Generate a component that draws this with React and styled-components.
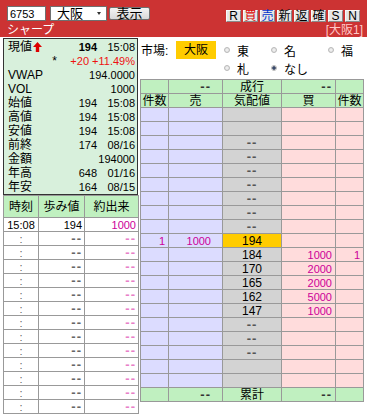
import React from 'react';
import styled, { createGlobalStyle } from 'styled-components';

const red = '#cc3333';
const magenta = '#cc0099';
const headGreen = '#c0f0c0';
const gridGray = '#999999';

const GlobalStyle = createGlobalStyle`
  html, body {
    margin: 0;
    padding: 0;
    background: #ffffff;
  }
  body {
    font-family: "Liberation Sans", "Noto Sans CJK JP", sans-serif;
    font-size: 11px;
    color: #000;
  }
`;

const Page = styled.div`
  width: 367px;
`;

/* ---------- header ---------- */

const Header = styled.header`
  background: ${red};
  height: 37px;
  box-sizing: border-box;
  padding: 6px 4px 0 7px;
`;

const HeaderTop = styled.div`
  display: flex;
  align-items: flex-start;
  height: 16px;
`;

const CodeInput = styled.input`
  box-sizing: border-box;
  width: 39px;
  height: 15px;
  margin: 0;
  padding: 0 2px;
  border: 1px solid #6f6f6f;
  background: #fff;
  font: 11px "Liberation Sans", sans-serif;
  color: #000;
  outline: none;
`;

const SelectWrap = styled.div`
  position: relative;
  width: 57px;
  height: 15px;
  margin-left: 4px;
`;

const MarketSelect = styled.select`
  appearance: none;
  box-sizing: border-box;
  width: 100%;
  height: 100%;
  margin: 0;
  padding: 0 0 0 6px;
  border: 1px solid #6f6f6f;
  border-radius: 0;
  background: #fff;
  font: 13px/13px "Liberation Sans", "Noto Sans CJK JP", sans-serif;
  color: #000;
`;

const SelectArrow = styled.span`
  position: absolute;
  right: 6px;
  top: 6px;
  width: 0;
  height: 0;
  border-left: 2px solid transparent;
  border-right: 2px solid transparent;
  border-top: 3px solid #333;
  pointer-events: none;
`;

const ShowButton = styled.button`
  box-sizing: border-box;
  width: 41px;
  height: 13px;
  margin: 1px 0 0 2px;
  padding: 0;
  border: 1px solid #707070;
  border-radius: 2px;
  background: linear-gradient(#f4f4f4, #d8d8d8);
  font: 13px/11px "Liberation Sans", "Noto Sans CJK JP", sans-serif;
  color: #000;
`;

const ToolGroup = styled.div`
  display: flex;
  gap: 2px;
  margin: 4px 3px 0 auto;
`;

const ToolButton = styled.button`
  box-sizing: border-box;
  width: 15px;
  height: 12px;
  margin: 0;
  padding: 0;
  border: 1px solid;
  border-color: #f8f8f8 #8a8a8a #8a8a8a #f8f8f8;
  background: #e6e6e6;
  font: 12px/10px "Liberation Sans", "Noto Sans CJK JP", sans-serif;
  color: ${p => p.$color || '#000'};
`;

const HeaderBottom = styled.div`
  display: flex;
  justify-content: space-between;
  margin-top: 1px;
  height: 14px;
  line-height: 14px;
  font-size: 12px;
`;

const CompanyName = styled.span`
  color: #ffffff;
`;

const MarketTag = styled.span`
  color: #ffc8c8;
`;

/* ---------- body ---------- */

const Main = styled.div`
  display: flex;
  align-items: flex-start;
  margin-top: 1px;
`;

const LeftCol = styled.div`
  width: 135px;
  margin-left: 3px;
`;

const InfoBox = styled.div`
  border: 1px solid #333;
  background: #d8f0dc;
  padding: 1px 2px 0 4px;
`;

const InfoRow = styled.div`
  display: grid;
  grid-template-columns: 1fr 40px 38px;
  height: 14px;
  line-height: 14px;
  white-space: nowrap;
`;

const InfoLabel = styled.span`
  display: flex;
  align-items: center;
  justify-content: ${p => (p.$right ? 'flex-end' : 'flex-start')};
  font-size: 12px;
`;

const InfoValue = styled.span`
  grid-column: ${p => (p.$wide ? '2 / 4' : 'auto')};
  text-align: right;
  font-weight: ${p => (p.$bold ? 700 : 400)};
  color: ${p => p.$color || '#000'};
`;

const GridTable = styled.table`
  border-collapse: collapse;
  table-layout: fixed;
  border: 1px solid ${gridGray};
`;

const TickTable = styled(GridTable)`
  width: 135px;
`;

const HeadCell = styled.th`
  height: 21px;
  padding: 0;
  border: 1px solid ${gridGray};
  background: ${headGreen};
  font-size: 12px;
  font-weight: 400;
  line-height: 14px;
  text-align: center;
`;

const Row = styled.tr`
  height: 14px;
`;

const Cell = styled.td`
  padding: 0 ${p => p.$pr ?? 2}px 0 0;
  border: 1px solid ${gridGray};
  background: ${p => p.$bg || '#fff'};
  color: ${p => p.$color || '#000'};
  text-align: ${p => p.$align || 'right'};
  font-size: ${p => p.$size || 11}px;
  line-height: 12px;
  white-space: nowrap;
  overflow: hidden;
`;

const Dash = styled.span`
  font-size: 13px;
  font-weight: 700;
  letter-spacing: 1px;
  color: ${p => p.$color || '#555'};
`;

const RightCol = styled.div`
  flex: 1;
`;

const MarketBar = styled.div`
  display: flex;
  align-items: flex-start;
  height: 41px;
  box-sizing: border-box;
  padding-top: 3px;
`;

const MarketLabel = styled.span`
  width: 35px;
  padding-left: 3px;
  line-height: 20px;
  font-size: 12px;
`;

const MarketBadge = styled.span`
  width: 40px;
  height: 18px;
  line-height: 18px;
  background: #ffcc00;
  text-align: center;
  font-size: 12px;
`;

const RadioGrid = styled.div`
  display: grid;
  grid-template-columns: 47px 57px 1fr;
  grid-auto-rows: 18px;
  margin-left: 7px;
`;

const RadioItem = styled.label`
  display: flex;
  align-items: center;
  gap: 7px;
  padding-left: 1px;
  font-size: 12px;
  color: #000;
`;

const Radio = styled.input.attrs({ type: 'radio' })`
  appearance: none;
  width: 6px;
  height: 6px;
  margin: 0;
  border: 1px solid #b8b8b8;
  border-radius: 50%;
  background: ${p =>
    p.checked
      ? 'radial-gradient(circle, #3a4a6a 0 1.5px, #e6e6e6 2px)'
      : 'radial-gradient(circle, #f4f4f4, #dcdcdc)'};
`;

const BookTable = styled(GridTable)`
  width: 223px;
  margin-left: 2px;
`;

const BookHead = styled.td`
  padding: 0 ${p => p.$pr ?? 0}px 0 0;
  border: 1px solid ${gridGray};
  background: ${headGreen};
  text-align: ${p => p.$align || 'center'};
  font-size: 12px;
  line-height: 12px;
  white-space: nowrap;
`;

const UpArrow = () => (
  <svg width="9" height="10" viewBox="0 0 9 10" style={{ marginLeft: 1 }}>
    <path d="M4.5 0 L9 5 H6.2 V10 H2.8 V5 H0 Z" fill="#dd0000" />
  </svg>
);

const info = [
  { label: '始値', value: '194', time: '15:08' },
  { label: '高値', value: '194', time: '15:08' },
  { label: '安値', value: '194', time: '15:08' },
  { label: '前終', value: '174', time: '08/16' },
];

const ticks = [
  { time: '15:08', price: '194', vol: '1000' },
  ...Array.from({ length: 13 }, () => ({ time: ':' })),
];

const dashRow = { price: '--' };
const book = [
  {},
  {},
  ...Array.from({ length: 7 }, () => dashRow),
  { sc: '1', sell: '1000', price: '194', hit: true },
  { price: '184', buy: '1000', bc: '1' },
  { price: '170', buy: '2000' },
  { price: '165', buy: '2000' },
  { price: '162', buy: '5000' },
  { price: '147', buy: '1000' },
  ...Array.from({ length: 3 }, () => dashRow),
  {},
  {},
];

const SELL_BG = '#dcdcff';
const PRICE_BG = '#d3d3d3';
const BUY_BG = '#ffdcdc';

export default function App() {
  return (
    <Page>
      <GlobalStyle />
      <Header>
        <HeaderTop>
          <CodeInput defaultValue="6753" />
          <SelectWrap>
            <MarketSelect defaultValue="osaka">
              <option value="osaka">大阪</option>
            </MarketSelect>
            <SelectArrow />
          </SelectWrap>
          <ShowButton>表示</ShowButton>
          <ToolGroup>
            <ToolButton>R</ToolButton>
            <ToolButton $color="#dd0000">買</ToolButton>
            <ToolButton $color="#0033cc">売</ToolButton>
            <ToolButton>新</ToolButton>
            <ToolButton>返</ToolButton>
            <ToolButton>確</ToolButton>
            <ToolButton>S</ToolButton>
            <ToolButton>N</ToolButton>
          </ToolGroup>
        </HeaderTop>
        <HeaderBottom>
          <CompanyName>シャープ</CompanyName>
          <MarketTag>[大阪1]</MarketTag>
        </HeaderBottom>
      </Header>

      <Main>
        <LeftCol>
          <InfoBox>
            <InfoRow>
              <InfoLabel>
                現値
                <UpArrow />
              </InfoLabel>
              <InfoValue $bold>194</InfoValue>
              <InfoValue>15:08</InfoValue>
            </InfoRow>
            <InfoRow>
              <InfoLabel $right>*</InfoLabel>
              <InfoValue $wide $color="#ee1111">+20 +11.49%</InfoValue>
            </InfoRow>
            <InfoRow>
              <InfoLabel>VWAP</InfoLabel>
              <InfoValue $wide>194.0000</InfoValue>
            </InfoRow>
            <InfoRow>
              <InfoLabel>VOL</InfoLabel>
              <InfoValue $wide>1000</InfoValue>
            </InfoRow>
            {info.map(r => (
              <InfoRow key={r.label}>
                <InfoLabel>{r.label}</InfoLabel>
                <InfoValue>{r.value}</InfoValue>
                <InfoValue>{r.time}</InfoValue>
              </InfoRow>
            ))}
            <InfoRow>
              <InfoLabel>金額</InfoLabel>
              <InfoValue $wide>194000</InfoValue>
            </InfoRow>
            <InfoRow>
              <InfoLabel>年高</InfoLabel>
              <InfoValue>648</InfoValue>
              <InfoValue>01/16</InfoValue>
            </InfoRow>
            <InfoRow>
              <InfoLabel>年安</InfoLabel>
              <InfoValue>164</InfoValue>
              <InfoValue>08/15</InfoValue>
            </InfoRow>
          </InfoBox>

          <TickTable>
            <colgroup>
              <col style={{ width: 35 }} />
              <col style={{ width: 46 }} />
              <col style={{ width: 54 }} />
            </colgroup>
            <thead>
              <tr>
                <HeadCell>時刻</HeadCell>
                <HeadCell>歩み値</HeadCell>
                <HeadCell>約出来</HeadCell>
              </tr>
            </thead>
            <tbody>
              {ticks.map((t, i) => (
                <Row key={i}>
                  <Cell $align="center" $pr={0} $color={t.price ? '#000' : '#666'}>
                    {t.time}
                  </Cell>
                  <Cell>{t.price || <Dash $color="#666">--</Dash>}</Cell>
                  <Cell $color={magenta}>{t.vol || <Dash $color="#e880c8">--</Dash>}</Cell>
                </Row>
              ))}
            </tbody>
          </TickTable>
        </LeftCol>

        <RightCol>
          <MarketBar>
            <MarketLabel>市場:</MarketLabel>
            <MarketBadge>大阪</MarketBadge>
            <RadioGrid>
              <RadioItem><Radio name="mk" readOnly />東</RadioItem>
              <RadioItem><Radio name="mk" readOnly />名</RadioItem>
              <RadioItem><Radio name="mk" readOnly />福</RadioItem>
              <RadioItem><Radio name="mk" readOnly />札</RadioItem>
              <RadioItem><Radio name="mk" readOnly checked />なし</RadioItem>
            </RadioGrid>
          </MarketBar>

          <BookTable>
            <colgroup>
              <col style={{ width: 28 }} />
              <col style={{ width: 54 }} />
              <col style={{ width: 59 }} />
              <col style={{ width: 54 }} />
              <col style={{ width: 28 }} />
            </colgroup>
            <tbody>
              <Row>
                <BookHead />
                <BookHead $align="right" $pr={11}><Dash $color="#333">--</Dash></BookHead>
                <BookHead>成行</BookHead>
                <BookHead $align="right" $pr={3}><Dash $color="#333">--</Dash></BookHead>
                <BookHead />
              </Row>
              <Row>
                <BookHead>件数</BookHead>
                <BookHead>売</BookHead>
                <BookHead>気配値</BookHead>
                <BookHead>買</BookHead>
                <BookHead>件数</BookHead>
              </Row>
              {book.map((r, i) => (
                <Row key={i}>
                  <Cell $bg={SELL_BG} $pr={3} $color={magenta}>{r.sc}</Cell>
                  <Cell $bg={SELL_BG} $pr={11} $color={magenta}>{r.sell}</Cell>
                  <Cell $bg={r.hit ? '#ffcc00' : PRICE_BG} $align="center" $pr={0} $size={12}>
                    {r.price === '--' ? <Dash>--</Dash> : r.price}
                  </Cell>
                  <Cell $bg={BUY_BG} $pr={3} $color={magenta}>{r.buy}</Cell>
                  <Cell $bg={BUY_BG} $pr={3} $color={magenta}>{r.bc}</Cell>
                </Row>
              ))}
              <Row>
                <BookHead />
                <BookHead $align="right" $pr={11}><Dash $color="#333">--</Dash></BookHead>
                <BookHead>累計</BookHead>
                <BookHead $align="right" $pr={3}><Dash $color="#333">--</Dash></BookHead>
                <BookHead />
              </Row>
            </tbody>
          </BookTable>
        </RightCol>
      </Main>
    </Page>
  );
}
